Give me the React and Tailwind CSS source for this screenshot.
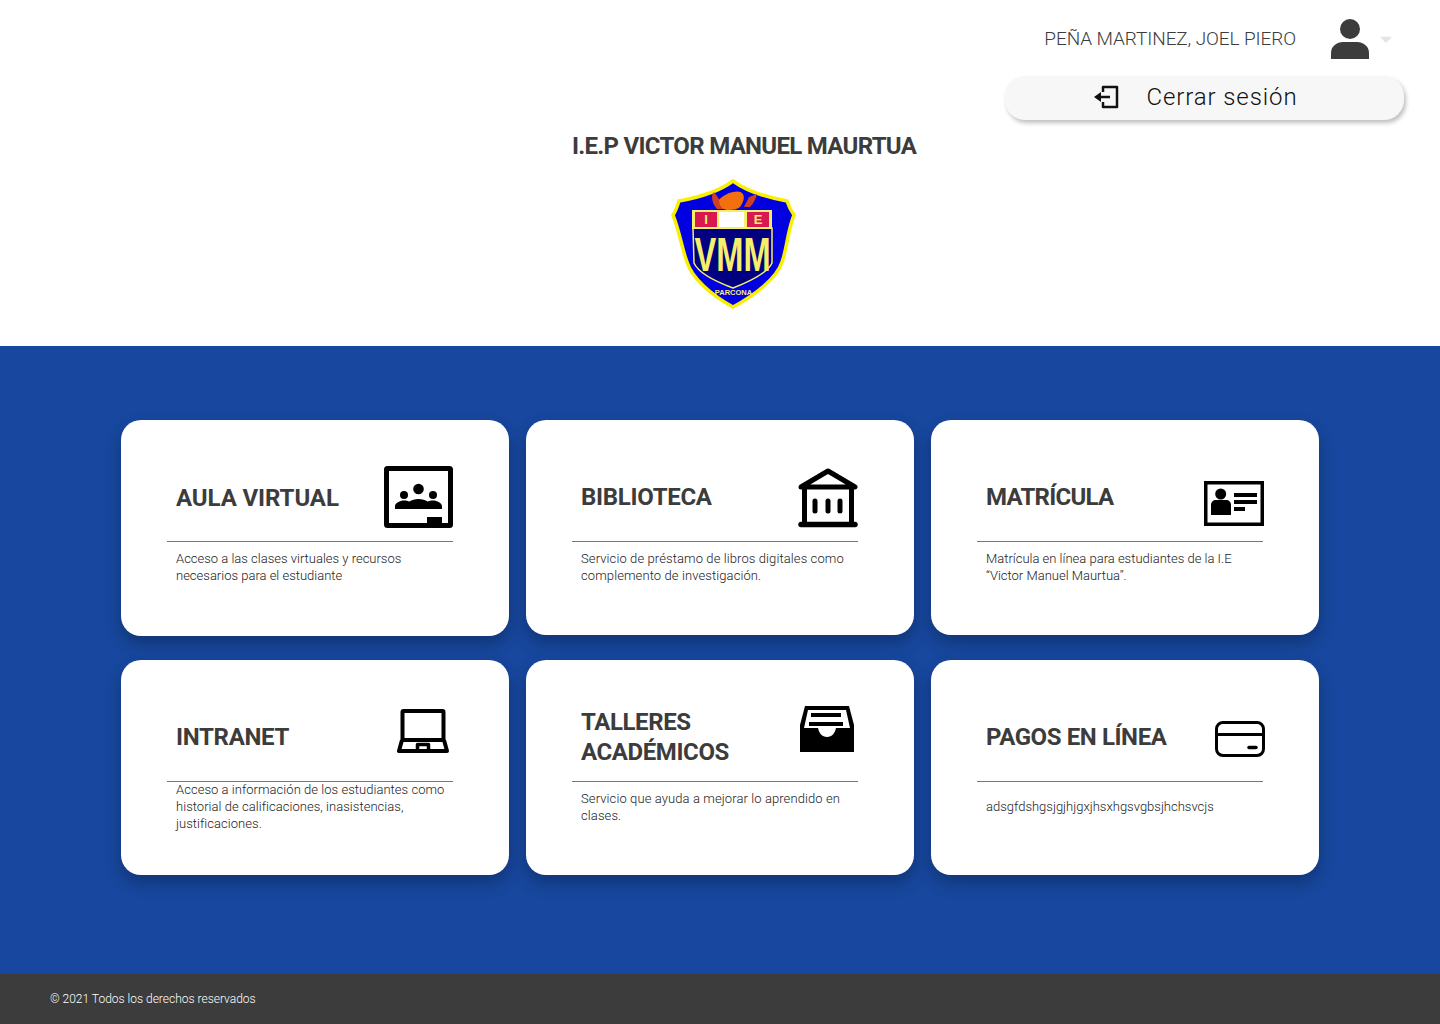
import { FaCaretDown } from "react-icons/fa"

function ClassroomIcon() {
  return (
    <svg viewBox="0 0 69 62" className="w-[69px] h-[62px]">
      <rect x="2.500" y="2.500" width="64" height="57" rx="1" fill="#fff" stroke="#000" strokeWidth="5" />
      <rect x="43" y="51" width="15" height="7" fill="#000" />
      <circle cx="34.500" cy="23" r="5.300" fill="#000" />
      <circle cx="20" cy="29" r="4" fill="#000" />
      <circle cx="49" cy="29" r="4" fill="#000" />
      <path d="M11 43v-3c0-3 5-5.500 9-5.500 2 0 4 .5 5.500 1 2-1.500 5.500-2.500 9-2.500s7 1 9 2.500c1.500-.5 3.500-1 5.500-1 4 0 9 2.500 9 5.500v3z" fill="#000" />
    </svg>
  )
}

function BankIcon() {
  return (
    <svg viewBox="0 0 60 60" className="w-[60px] h-[60px]" fill="none" stroke="#000" strokeLinecap="round" strokeLinejoin="round">
      <path d="M3 19 30 3l27 16z" strokeWidth="5" />
      <path d="M6.500 22v34M53.500 22v34" strokeWidth="5" />
      <path d="M3 56.500h54" strokeWidth="5.500" />
      <path d="M17 33v10M30 33v10M42 33v10" strokeWidth="5" />
    </svg>
  )
}

function IdCardIcon() {
  return (
    <svg viewBox="0 0 60 45" className="w-[60px] h-[45px]">
      <rect x="1.750" y="1.750" width="56.500" height="41.500" fill="#fff" stroke="#000" strokeWidth="3.500" />
      <circle cx="16.700" cy="13" r="5.500" fill="#000" />
      <path d="M7 34V24c0-3 2-5 5-5h10c3 0 5 2 5 5v10z" fill="#000" />
      <path d="M30 12h23v4H30zM30 19h23v4H30zM30 26h11v4H30z" fill="#000" />
    </svg>
  )
}

function LaptopIcon() {
  return (
    <svg viewBox="0 0 52 44" className="w-[52px] h-[44px]" fill="none" stroke="#000" strokeLinejoin="round">
      <rect x="5.500" y="2" width="41" height="29" rx="1" strokeWidth="4" />
      <path d="M5 31 2 42h48l-3-11" strokeWidth="4" />
      <path d="M20.500 42v-6.500h11V42" strokeWidth="3.500" />
    </svg>
  )
}

function TrayIcon() {
  return (
    <svg viewBox="0 0 54 46" className="w-[54px] h-[46px]">
      <path d="M5 0h44l5 19v27H0V19z" fill="#000" />
      <path d="M8 4h38l4 18H36c-1 5-4 9-9 9s-8-4-9-9H4z" fill="#fff" />
      <path d="M11 7h30v4H11zM9 16h34v4H9z" fill="#000" />
    </svg>
  )
}

function CardIcon() {
  return (
    <svg viewBox="0 0 50 36" className="w-[50px] h-[36px]" fill="none" stroke="#000">
      <rect x="1.500" y="1.500" width="47" height="33" rx="6.500" strokeWidth="3" />
      <path d="M1.500 13.500h47" strokeWidth="3" />
      <path d="M34 26.500h7" strokeWidth="3.500" strokeLinecap="round" />
    </svg>
  )
}

function Logo() {
  return (
    <svg viewBox="0 0 135 135" className="w-[135px] h-[135px]">
      <path d="M68 6 C80 15 100 22 122 26 C124 32 126 36 129 40 C122 58 122 74 117 87 C112 103 90 120 68 132 C46 120 27 103 22 87 C17 74 15 58 8 40 C11 36 12 32 14 26 C36 22 56 15 68 6z" fill="#0000e0" stroke="#f7f000" strokeWidth="3.500" />
      <path d="M49 17c-3 2-2 9 0 13l3 4h9z" fill="#d04020" />
      <path d="M92 19l-8 3-5 10h6c3-3 6-8 7-13z" fill="#d04020" />
      <path d="M54 25c3-4 9-7 14-8 4-1 8-1 10 2 2 4 0 9-3 13-2 2-6 3-11 3-4 0-8-2-9-5z" fill="#f4700f" />
      <path d="M28 53h79v35c-4 9-21 18-39 25-19-7-35-16-39-25z" fill="#000080" stroke="#f5ef6a" strokeWidth="1.500" />
      <rect x="27" y="35" width="80" height="19" fill="#f5ef6a" />
      <rect x="30" y="37" width="22" height="15" fill="#d81850" />
      <rect x="82" y="37" width="22" height="15" fill="#d81850" />
      <rect x="54" y="37" width="25" height="15" fill="#fff" />
      <text x="41" y="49" textAnchor="middle" fill="#f5ef6a" fontSize="13" fontWeight="700" fontFamily="Liberation Sans">I</text>
      <text x="93" y="49" textAnchor="middle" fill="#f5ef6a" fontSize="13" fontWeight="700" fontFamily="Liberation Sans">E</text>
      <g transform="translate(67.500 96) scale(0.68 1)">
        <text x="0" y="0" textAnchor="middle" fill="#f5ef6a" fontSize="48" fontWeight="700" fontFamily="Liberation Sans">VMM</text>
      </g>
      <text x="68.500" y="120" textAnchor="middle" fill="#f5ef6a" fontSize="7.500" fontWeight="700" fontFamily="Liberation Sans">PARCONA</text>
    </svg>
  )
}

const cards = [
  {
    title: "AULA VIRTUAL",
    text: ["Acceso a las clases virtuales y recursos", "necesarios para el estudiante"],
    icon: <ClassroomIcon />,
    titleClass: "mt-[63px] tracking-[-0.1px]",
    iconClass: "mt-[46px]",
    textClass: "pt-[8px] h-[94px]",
  },
  {
    title: "BIBLIOTECA",
    text: ["Servicio de préstamo de libros digitales como", "complemento de investigación."],
    icon: <BankIcon />,
    titleClass: "mt-[62px] tracking-[-0.3px]",
    iconClass: "mt-[48px]",
    textClass: "pt-[8px] h-[93px] tracking-[0.1px]",
  },
  {
    title: "MATRÍCULA",
    text: ["Matrícula en línea para estudiantes de la I.E", "“Victor Manuel Maurtua”."],
    icon: <IdCardIcon />,
    titleClass: "mt-[62px] tracking-[-0.75px]",
    iconClass: "mt-[61px] mr-[-1px]",
    textClass: "pt-[8px] h-[93px]",
  },
  {
    title: "INTRANET",
    text: ["Acceso a información de los estudiantes como", "historial de calificaciones, inasistencias,", "justificaciones."],
    icon: <LaptopIcon />,
    titleClass: "mt-[62px] tracking-[-0.3px]",
    iconClass: "mt-[49px] mr-[4px]",
    textClass: "-mt-[1px] h-[94px] tracking-[0.04px]",
  },
  {
    title: "TALLERES ACADÉMICOS",
    text: ["Servicio que ayuda a mejorar lo aprendido en", "clases."],
    icon: <TrayIcon />,
    titleClass: "mt-[47px] w-[170px] tracking-[-0.4px]",
    iconClass: "mt-[46px] mr-[4px]",
    textClass: "pt-[8px] h-[93px] tracking-[0.1px]",
  },
  {
    title: "PAGOS EN LÍNEA",
    text: ["adsgfdshgsjgjhjgxjhsxhgsvgbsjhchsvcjs"],
    icon: <CardIcon />,
    titleClass: "mt-[62px] tracking-[-0.4px]",
    iconClass: "mt-[61px] mr-[-2px]",
    textClass: "pt-[16px] h-[93px]",
  },
]

function App() {
  return (
    <div className="w-full min-h-[1024px] flex flex-col bg-white font-['Roboto',sans-serif]">
      {/* HEADER */}
      <header className="h-[346px] flex flex-col">
        <div className="flex justify-end items-center h-[76px] pr-[45px] pt-[2px]">
          <span className="text-[19px] font-light text-[#3c3c3c] tracking-[-0.1px]">
            PEÑA MARTINEZ, JOEL PIERO
          </span>
          <svg viewBox="0 0 38 40" className="w-[38px] h-[40px] ml-[35px]">
            <circle cx="19" cy="10" r="10" fill="#3c3c3c" />
            <path d="M0 40v-6c0-7 6-11 12-11h14c6 0 12 4 12 11v6z" fill="#3c3c3c" />
          </svg>
          <FaCaretDown className="text-[#e4e4e4] text-[18px] ml-[8px]" />
        </div>
        <div className="flex justify-end pr-[36px]">
          <button className="w-[399px] h-[44px] pr-[18px] pb-[2px] flex items-center justify-center rounded-[20px] bg-[#f7f7f7] shadow-[2px_3px_4px_rgba(0,0,0,0.25)] text-[24px] font-light text-[#111] tracking-[0.9px] font-['Roboto',sans-serif]">
            <svg viewBox="0 0 26 24" className="w-[26px] h-[24px] mr-[27px]" fill="none" stroke="#111" strokeWidth="2.500">
              <path d="M9 7V2h14v20H9v-5" strokeLinejoin="round" />
              <path d="M5 12h11" />
              <path d="M0 12 7 7v10z" fill="#111" stroke="none" />
            </svg>
            Cerrar sesión
          </button>
        </div>
        <h1 className="pl-[48px] mt-[11px] text-center text-[24px] leading-[30px] font-bold text-[#3c3c3c] tracking-[-0.7px]">
          I.E.P VICTOR MANUEL MAURTUA
        </h1>
        <div className="flex justify-center pl-[24px] mt-[14px]">
          <Logo />
        </div>
      </header>

      {/* CARDS */}
      <main className="flex-1 bg-[#17479e] pt-[74px]">
        <div className="grid grid-cols-[388px_388px_388px] gap-x-[17px] gap-y-[24px] justify-center items-start">
          {cards.map((card) => (
            <div
              key={card.title}
              className="bg-white rounded-[20px] pl-[46px] pr-[56px] shadow-[0_8px_16px_rgba(0,0,0,0.25)]"
            >
              <div className="flex justify-between items-start h-[122px] border-b border-[#777]">
                <h2 className={`pl-[9px] text-[24px] leading-[30px] font-bold text-[#3c3c3c] ${card.titleClass}`}>
                  {card.title}
                </h2>
                <div className={card.iconClass}>{card.icon}</div>
              </div>
              <p className={`pl-[9px] text-[13px] leading-[17px] font-light text-[#222] ${card.textClass}`}>
                {card.text.map((line) => (
                  <span key={line} className="block whitespace-nowrap">{line}</span>
                ))}
              </p>
            </div>
          ))}
        </div>
      </main>

      {/* FOOTER */}
      <footer className="h-[50px] bg-[#3c3c3c] flex items-center pl-[50px]">
        <p className="text-[12px] font-light text-white">© 2021 Todos los derechos reservados</p>
      </footer>
    </div>
  )
}

export default App
